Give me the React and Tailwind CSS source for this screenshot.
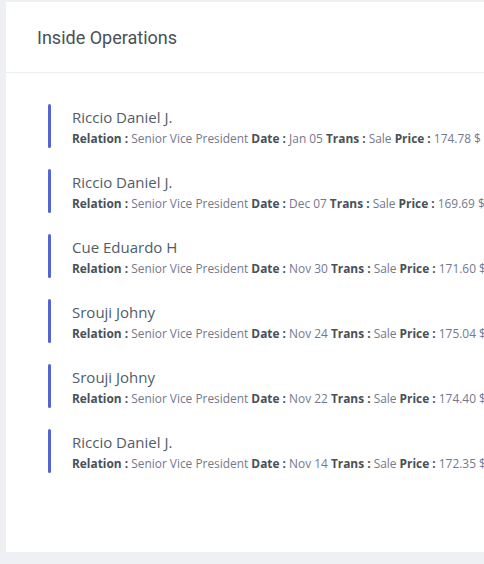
import React from 'react';

const trades = [
  { name: 'Riccio Daniel J.', date: 'Jan 05', price: '174.78' },
  { name: 'Riccio Daniel J.', date: 'Dec 07', price: '169.69' },
  { name: 'Cue Eduardo H', date: 'Nov 30', price: '171.60' },
  { name: 'Srouji Johny', date: 'Nov 24', price: '175.04' },
  { name: 'Srouji Johny', date: 'Nov 22', price: '174.40' },
  { name: 'Riccio Daniel J.', date: 'Nov 14', price: '172.35' },
];

const Label = ({ children }) => (
  <span className="font-bold text-[#495057]">{children} : </span>
);

const App = () => {
  return (
    <div className="w-[484px] h-[564px] bg-[#eef0f4] pt-[2px] pl-[6px] overflow-hidden">
      <div className="w-[478px] h-[550px] bg-white overflow-hidden">
        <div className="h-[71px] border-b border-[#eceef1] flex items-center pl-[31px]">
          <h2 className="text-[18px] font-normal text-[#495057] font-['Roboto',sans-serif]">Inside Operations</h2>
        </div>
        <div className="pt-[31px] pl-[42px] flex flex-col gap-[21px] font-['Open_Sans',sans-serif]">
          {trades.map((t, i) => (
            <div key={i} className="flex h-[44px]">
              <div className="w-[3px] rounded-full bg-[#5664d2] shrink-0" />
              <div className="pl-[21px] pt-[2px] whitespace-nowrap">
                <div className="text-[15px] leading-[22px] text-[#505d69]">{t.name}</div>
                <div className="text-[11.9px] leading-[20px] text-[#74788d]">
                  <Label>Relation</Label>Senior Vice President{' '}
                  <Label>Date</Label>{t.date}{' '}
                  <Label>Trans</Label>Sale{' '}
                  <Label>Price</Label>{t.price} $
                </div>
              </div>
            </div>
          ))}
        </div>
      </div>
    </div>
  );
};

export default App;
